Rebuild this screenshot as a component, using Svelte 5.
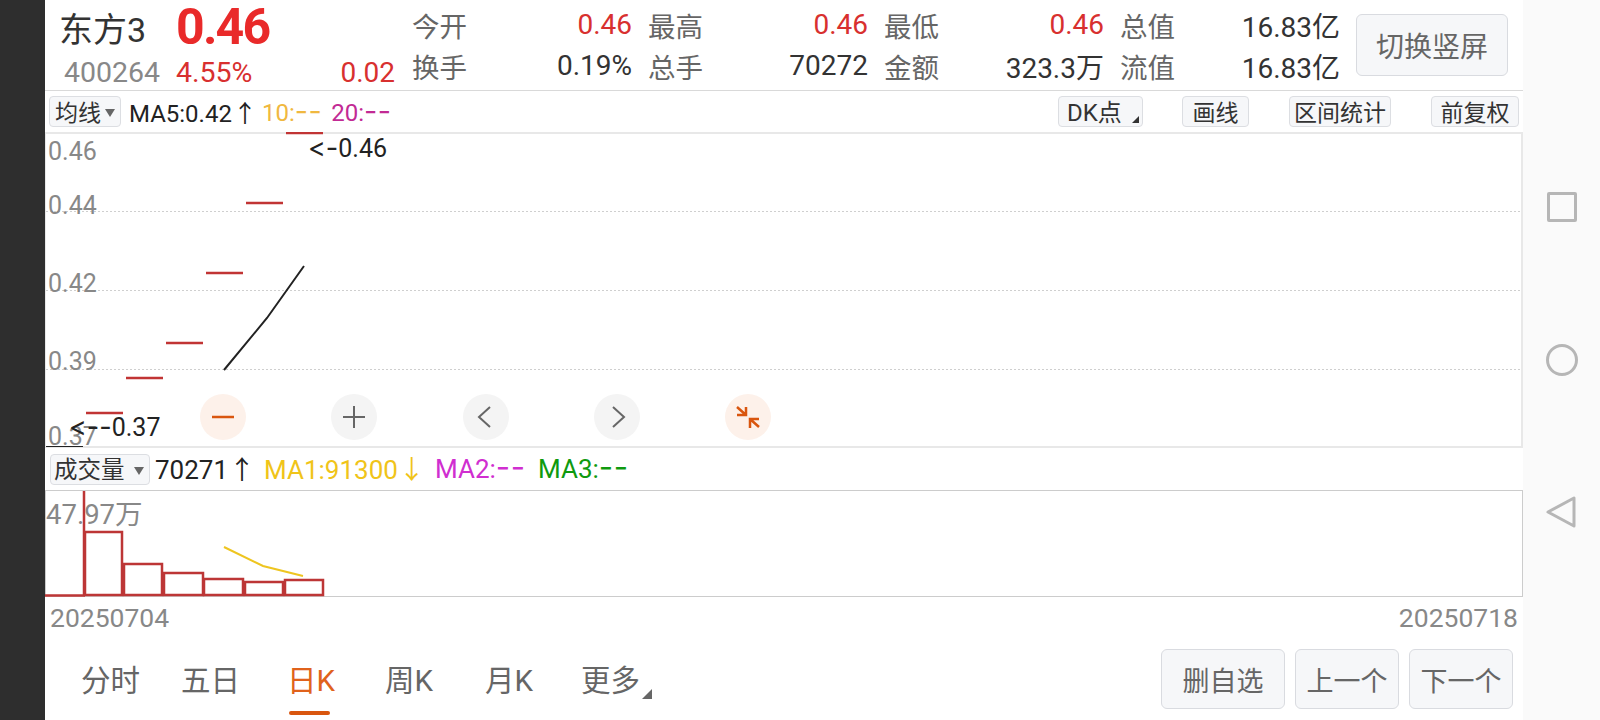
<script>
  const stats = [
    ['今开', '0.46', true], ['最高', '0.46', true], ['最低', '0.46', true], ['总值', '16.83亿', false],
    ['换手', '0.19%', false], ['总手', '70272', false], ['金额', '323.3万', false], ['流值', '16.83亿', false]
  ];
  const tools = [
    { t: 'DK点', w: 85, corner: true, ml: 0 },
    { t: '画线', w: 67, ml: 39 },
    { t: '区间统计', w: 102, ml: 40 },
    { t: '前复权', w: 88, ml: 40 }
  ];
  const grid = [211, 290, 369];
  const axis = [['0.46', 160], ['0.44', 214], ['0.42', 292], ['0.39', 370], ['0.37', 445]];
  const candles = [[86, 413], [126, 378], [166, 343], [206, 273], [246, 203], [286, 133]];
  const bars = [[85, 532, 37], [124, 564, 38], [164, 573, 39], [204, 579, 39], [245, 582, 38], [285, 580, 38]];
  const tabs = ['分时', '五日', '日K', '周K', '月K', '更多'];
</script>

<div class="screen">
  <aside class="rail"></aside>
  <main class="main">
    <header class="head">
      <div class="quote">
        <div class="q1"><span class="name">东方3</span><span class="price">0.46</span></div>
        <div class="q2"><span class="code">400264</span><span class="pct">4.55%</span><span class="chg">0.02</span></div>
      </div>
      <div class="stats">
        {#each stats as s}
          <div class="stat"><span class="lab">{s[0]}</span><span class="val" class:red={s[2]}>{s[1]}</span></div>
        {/each}
      </div>
      <button class="btn big">切换竖屏</button>
    </header>

    <div class="bar1">
      <span class="sel s1">均线<i class="down"></i></span>
      <span class="ma m5">MA5:0.42<span class="arr">↑</span></span>
      <span class="ma c10">10:<b class="dash">--</b></span>
      <span class="ma c20">20:<b class="dash">--</b></span>
      <div class="tools">
        {#each tools as x}
          <span class="sel tool" class:dk={x.corner} style="width:{x.w}px;margin-left:{x.ml}px">{x.t}{#if x.corner}<i class="corner"></i>{/if}</span>
        {/each}
      </div>
    </div>

    <div class="chart">
      <svg viewBox="45 132 1478 316" width="1478" height="316">
        {#each grid as y}
          <line x1="46" x2="1521" y1={y + 0.5} y2={y + 0.5} class="dot" />
        {/each}
        {#each axis as [t, y]}
          <text x="48" {y} class="ax">{t}</text>
        {/each}
        {#each candles as [x, y]}
          <line x1={x} x2={x + 37} y1={y} y2={y} class="cd" />
        {/each}
        <polyline points="224,370 267,318 304,266" class="ma5" />
        <text x="308" y="157" class="pr"><tspan class="arrowhead">&lt;-</tspan>0.46</text>
        <text x="69" y="436" class="pr"><tspan class="arrowhead">&lt;--</tspan>0.37</text>
        <line x1="46" x2="83" y1="446.5" y2="446.5" class="under" />
      </svg>
      <div class="ctrls">
        <span class="c act"><svg viewBox="0 0 46 46"><path d="M12 23h22" /></svg></span>
        <span class="c"><svg viewBox="0 0 46 46"><path d="M12 23h22M23 12v22" /></svg></span>
        <span class="c thin"><svg viewBox="0 0 46 46"><path d="M27 13L16 23l11 10" /></svg></span>
        <span class="c thin"><svg viewBox="0 0 46 46"><path d="M19 13l11 10-11 10" /></svg></span>
        <span class="c act"><svg viewBox="0 0 46 46"><path d="M12 13l9 8M12 21h9v-8M34 33l-9-8M34 25h-9v9" /></svg></span>
      </div>
    </div>

    <div class="bar2">
      <span class="sel s2">成交量<i class="down"></i></span>
      <span class="ma v0">70271<span class="arr">↑</span></span>
      <span class="ma m1">MA1:91300<span class="arr">↓</span></span>
      <span class="ma m2">MA2:<b class="dash">--</b></span>
      <span class="ma m3">MA3:<b class="dash">--</b></span>
    </div>

    <div class="vol">
      <svg viewBox="45 490 1478 107" width="1478" height="107">
        <path d="M84 491V596M45 595.500H85" class="vb" />
        {#each bars as [x, y, w]}
          <rect {x} {y} width={w} height={595 - y} class="vr" />
        {/each}
        <polyline points="224,547 263,566 303,576" class="ma1" />
        <text x="46" y="524" class="ax vmax">47.97万</text>
      </svg>
    </div>

    <div class="dates"><span>20250704</span><span>20250718</span></div>

    <div class="foot">
      <nav class="tabs">
        {#each tabs as t, i}
          <span class="tab" class:on={i === 2}>{t}{#if i === 5}<i class="corner big-corner"></i>{/if}</span>
        {/each}
      </nav>
      <div class="acts">
        <button class="btn a1">删自选</button>
        <button class="btn a2">上一个</button>
        <button class="btn a2">下一个</button>
      </div>
    </div>
  </main>
  <aside class="sys">
    <span class="sq"></span>
    <span class="ci"></span>
    <svg class="tri" viewBox="0 0 32 34" width="32" height="34"><path d="M3 17L29 3v28z" /></svg>
  </aside>
</div>

<style>
  :global(body) { margin: 0; background: #fff; }
  .screen {
    display: flex; width: 1600px; height: 720px; overflow: hidden;
    font-family: Roboto, "Noto Sans CJK SC", sans-serif; color: #333;
  }
  .rail { width: 45px; background: #2e2e2e; flex: none; }
  .main { width: 1478px; flex: none; display: flex; flex-direction: column; background: #fff; }
  .sys {
    flex: 1; background: #fafafa; display: flex; flex-direction: column; align-items: center;
    padding-top: 192px; box-sizing: border-box;
  }
  .sq { width: 30px; height: 30px; box-sizing: border-box; border: 3px solid #b6b6b6; border-radius: 2px; }
  .ci { width: 32px; height: 32px; box-sizing: border-box; border: 3px solid #b6b6b6; border-radius: 50%; margin-top: 122px; }
  .tri { margin-top: 119px; margin-left: -1px; }
  .tri path { fill: none; stroke: #b6b6b6; stroke-width: 3; stroke-linejoin: round; }

  .head {
    height: 91px; box-sizing: border-box; border-bottom: 1px solid #d9d9d9;
    display: grid; grid-template-columns: 367px 944px 152px; align-items: start; flex: none;
  }
  .quote { display: flex; flex-direction: column; }
  .q1 { display: flex; align-items: center; height: 54px; }
  .name { font-size: 34px; margin-left: 14px; width: 117px; color: #333; }
  .price { font-size: 50px; font-weight: 700; color: #e92a2a; letter-spacing: -1.800px; }
  .q2 { display: flex; align-items: center; height: 35px; padding-top: 2px; box-sizing: border-box; font-size: 28px; }
  .code { color: #888; margin-left: 19px; width: 112px; font-size: 28.500px; }
  .pct { color: #d8302f; font-size: 28.500px; }
  .chg { color: #d8302f; margin-left: auto; margin-right: 17px; }
  .stats {
    display: grid; grid-template-columns: repeat(4, 220px); column-gap: 16px;
    grid-auto-rows: 41px; padding-top: 4px;
  }
  .stat { display: flex; justify-content: space-between; align-items: center; font-size: 28px; }
  .lab { color: #666; font-size: 27.500px; }
  .val { color: #333; }
  .val.red { color: #d8302f; }
  .btn {
    background: #f6f7f9; border: 1px solid #d9dbe0; border-radius: 6px; color: #666;
    font-family: inherit; font-size: 27px; padding: 0; box-sizing: border-box;
  }
  .big { width: 152px; height: 62px; margin-top: 14px; font-size: 28px; }

  .bar1 { height: 41px; display: flex; align-items: center; flex: none; font-size: 24px; }
  .sel {
    position: relative; display: flex; align-items: center; justify-content: center; height: 31px; box-sizing: border-box;
    background: #f6f7f9; border: 1px solid #dcdee2; border-radius: 4px; color: #333; font-size: 23px;
    padding-bottom: 2px;
  }
  .s1 { width: 72px; margin-left: 4px; justify-content: flex-start; padding-left: 5px; }
  .down {
    position: absolute; right: 5px; top: 12px; width: 0; height: 0;
    border: 5px solid transparent; border-top: 8px solid #666; border-bottom: 0;
  }
  .ma { white-space: nowrap; }
  .m5 { margin-left: 8px; color: #222; }
  .arr { font-family: "Noto Sans CJK SC", sans-serif; margin-left: 1px; }
  .c10 { color: #f0b840; margin-left: 5px; }
  .c20 { color: #c22a94; margin-left: 9px; }
  .dash { font-family: Inter, sans-serif; font-weight: 400; font-size: 1.200em; letter-spacing: 0.500px; line-height: 1; font-feature-settings: "calt" 0; }
  .tools { display: flex; margin-left: auto; margin-right: 4px; }
  .tool { font-size: 23px; }
  .dk { justify-content: flex-start; padding-left: 8px; font-size: 24px; }
  .corner {
    position: absolute; right: 3px; bottom: 3px; width: 0; height: 0;
    border-left: 7px solid transparent; border-bottom: 7px solid #333;
  }

  .chart { position: relative; height: 316px; flex: none; }
  .chart > svg { display: block; background:
    linear-gradient(#e8e8e8, #e8e8e8) top / 100% 2px no-repeat,
    linear-gradient(#e8e8e8, #e8e8e8) bottom / 100% 2px no-repeat,
    linear-gradient(#e8e8e8, #e8e8e8) left / 1px 100% no-repeat,
    linear-gradient(#e8e8e8, #e8e8e8) right / 2px 100% no-repeat;
  }
  svg text { font-family: Roboto, "Noto Sans CJK SC", sans-serif; }
  .dot { stroke: #cfcfcf; stroke-width: 1; stroke-dasharray: 2 2; }
  .ax { font-size: 25px; fill: #888; }
  .vmax { font-size: 27.500px; }
  .pr { font-size: 25px; fill: #222; }
  .arrowhead { font-family: Inter, sans-serif; font-size: 27px; font-feature-settings: "calt" 0; font-variant-ligatures: none; }
  .cd { stroke: #c13434; stroke-width: 2.500; }
  .ma5 { fill: none; stroke: #222; stroke-width: 2; }
  .under { stroke: #222; stroke-width: 1; }
  .ctrls { position: absolute; left: 155px; top: 262px; display: flex; gap: 85.300px; }
  .c { width: 46px; height: 46px; border-radius: 50%; background: #f4f4f4; display: block; }
  .c svg { display: block; width: 46px; height: 46px; fill: none; stroke: #666; stroke-width: 2; }
  .c.act { background: #fdf1ea; }
  .c.act svg { stroke: #d9560f; stroke-width: 2.500; }

  .bar2 { height: 42px; display: flex; align-items: center; flex: none; font-size: 26px; }
  .bar2 .ma { padding-bottom: 3px; }
  .s2 { width: 100px; margin-left: 5px; font-size: 23.500px; justify-content: flex-start; padding-left: 3px; padding-bottom: 3px; }
  .v0 { margin-left: 5px; color: #222; width: 109px; }
  .m1 { color: #f0c419; width: 171px; }
  .m2 { color: #d02ed0; width: 103px; }
  .m3 { color: #0f9a0f; }

  .vol { height: 107px; flex: none; }
  .vol svg { display: block; background:
    linear-gradient(#ccc, #ccc) top / 100% 1px no-repeat,
    linear-gradient(#ccc, #ccc) bottom / 100% 1px no-repeat,
    linear-gradient(#ccc, #ccc) left / 1px 100% no-repeat,
    linear-gradient(#ccc, #ccc) right / 1px 100% no-repeat;
  }
  .vb { fill: none; stroke: #bd3636; stroke-width: 2.500; }
  .vr { fill: #fff; stroke: #bd3636; stroke-width: 2.500; }
  .ma1 { fill: none; stroke: #eec520; stroke-width: 2; }

  .dates {
    display: flex; justify-content: space-between; padding: 5px 5px 0 5px; height: 43px; box-sizing: border-box;
    font-size: 26.500px; color: #888; flex: none; line-height: 32px;
  }
  .foot { flex: 1; display: flex; justify-content: space-between; min-height: 0; }
  .tabs { display: grid; grid-template-columns: 100px 106px 98px 100px 96px auto; padding-left: 36px; align-items: start; }
  .tab {
    position: relative; display: block; font-size: 29.500px; color: #666; line-height: 40px; margin-top: 21px;
    height: 50px; width: max-content;
  }
  .tab.on { color: #e0621c; }
  .tab.on::after {
    content: ''; position: absolute; left: 2px; width: 41px; bottom: -4px; height: 4px;
    background: #d9560f; border-radius: 2px;
  }
  .big-corner { right: -12px; bottom: 12px; border-left-width: 10px; border-bottom-width: 10px; border-bottom-color: #666; }
  .acts { display: flex; gap: 10px; padding-top: 9px; padding-right: 10px; }
  .acts .btn { height: 60px; }
  .a1 { width: 124px; }
  .a2 { width: 104px; }
</style>
